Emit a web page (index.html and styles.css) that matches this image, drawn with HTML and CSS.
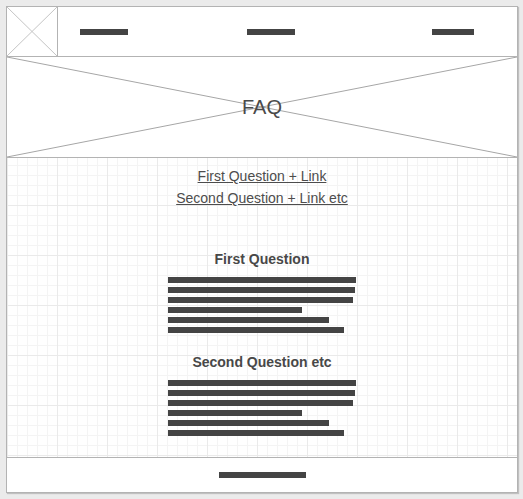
FILE: index.html
```html
<!DOCTYPE html>
<html lang="en">
<head>
  <meta charset="UTF-8">
  <meta name="viewport" content="width=device-width, initial-scale=1.0">
  <title>FAQ wireframe</title>
  <link rel="stylesheet" href="styles.css">
</head>
<body>
  <div class="frame">
    <!-- top bar: logo placeholder + nav -->
    <div class="header">
      <div class="logo">
        <svg class="cross" viewBox="0 0 50 49" preserveAspectRatio="none">
          <line x1="0" y1="0" x2="50" y2="49"></line>
          <line x1="50" y1="0" x2="0" y2="49"></line>
        </svg>
      </div>
      <div class="nav">
        <span class="bar nav-1"></span>
        <span class="bar nav-2"></span>
        <span class="bar nav-3"></span>
      </div>
    </div>

    <!-- hero image placeholder -->
    <div class="hero">
      <svg class="cross" viewBox="0 0 510 100" preserveAspectRatio="none">
        <line x1="0" y1="0" x2="510" y2="100"></line>
        <line x1="510" y1="0" x2="0" y2="100"></line>
      </svg>
      <h1 class="hero-title">FAQ</h1>
    </div>

    <div class="content">
      <div class="links">
        <a href="#q1">First Question + Link</a>
        <a href="#q2">Second Question + Link etc</a>
      </div>

      <div class="question" id="q1">
        <h2>First Question</h2>
        <div class="lines">
          <span class="bar" style="width:188px"></span>
          <span class="bar" style="width:187px"></span>
          <span class="bar" style="width:185px"></span>
          <span class="bar" style="width:134px"></span>
          <span class="bar" style="width:161px"></span>
          <span class="bar" style="width:176px"></span>
        </div>
      </div>

      <div class="question" id="q2">
        <h2>Second Question etc</h2>
        <div class="lines">
          <span class="bar" style="width:188px"></span>
          <span class="bar" style="width:187px"></span>
          <span class="bar" style="width:185px"></span>
          <span class="bar" style="width:134px"></span>
          <span class="bar" style="width:161px"></span>
          <span class="bar" style="width:176px"></span>
        </div>
      </div>
    </div>

    <div class="footer">
      <span class="bar foot-bar"></span>
    </div>
  </div>
</body>
</html>
```

FILE: styles.css
```css
* {
  box-sizing: border-box;
}
html,
body {
  margin: 0;
}
body {
  background: #ebebeb;
  padding: 6px;
  font-family: "Liberation Sans", Arial, sans-serif;
  color: #444;
}

.frame {
  width: 512px;
  height: 487px;
  border: 1px solid #b3b3b3;
  background: #fff;
  box-shadow: 1px 1px 1px rgba(0, 0, 0, .18);
  display: flex;
  flex-direction: column;
}

.bar {
  display: block;
  height: 6px;
  background: #444;
}

.cross {
  position: absolute;
  top: 0; left: 0;
  width: 100%; height: 100%;
}
.cross line {
  stroke: #a6a6a6;
  stroke-width: 1;
  vector-effect: non-scaling-stroke;
}

/* header */
.header {
  height: 50px;
  display: flex;
  border-bottom: 1px solid #b3b3b3;
}
.logo {
  position: relative;
  width: 51px;
  border-right: 1px solid #b3b3b3;
}
.logo .cross line {
  stroke: #c4c4c4;
}
.nav {
  flex: 1;
  display: flex;
  align-items: center;
  padding-top: 1px;
}
.nav-1 { width: 48px; margin-left: 22px; }
.nav-2 { width: 48px; margin-left: 119px; }
.nav-3 { width: 42px; margin-left: 137px; }

/* hero */
.hero {
  position: relative;
  height: 101px;
  border-bottom: 1px solid #b3b3b3;
  display: flex;
  align-items: center;
  justify-content: center;
}
.hero-title {
  position: relative;
  margin: 0;
  font-size: 20px;
  font-weight: normal;
  color: #4a4a4a;
}

/* grid area */
.content {
  flex: 1;
  padding-top: 7px;
  background-color: #fff;
  background-image:
    linear-gradient(to right, #eaeaea 1px, transparent 1px),
    linear-gradient(to bottom, #eaeaea 1px, transparent 1px),
    linear-gradient(to right, #f4f4f4 1px, transparent 1px),
    linear-gradient(to bottom, #f4f4f4 1px, transparent 1px);
  background-size: 50px 50px, 50px 50px, 10px 10px, 10px 10px;
  background-position: 0 47px, 0 47px, 0 7px, 0 7px;
}
.links {
  display: flex;
  flex-direction: column;
  align-items: center;
}
.links a {
  font-size: 14px;
  line-height: 22px;
  color: #4d4d4d;
  text-decoration: underline;
}

.question {
  display: flex;
  flex-direction: column;
  align-items: center;
}
#q1 { margin-top: 40px; }
#q2 { margin-top: 19px; }
.question h2 {
  margin: 0 0 8px;
  font-size: 14px;
  line-height: 20px;
  font-weight: bold;
  color: #484848;
}
.lines {
  width: 188px;
  display: flex;
  flex-direction: column;
  gap: 4px;
}

/* footer */
.footer {
  height: 35px;
  border-top: 1px solid #b3b3b3;
  display: flex;
  align-items: center;
  justify-content: center;
}
.foot-bar {
  width: 87px;
}
```
